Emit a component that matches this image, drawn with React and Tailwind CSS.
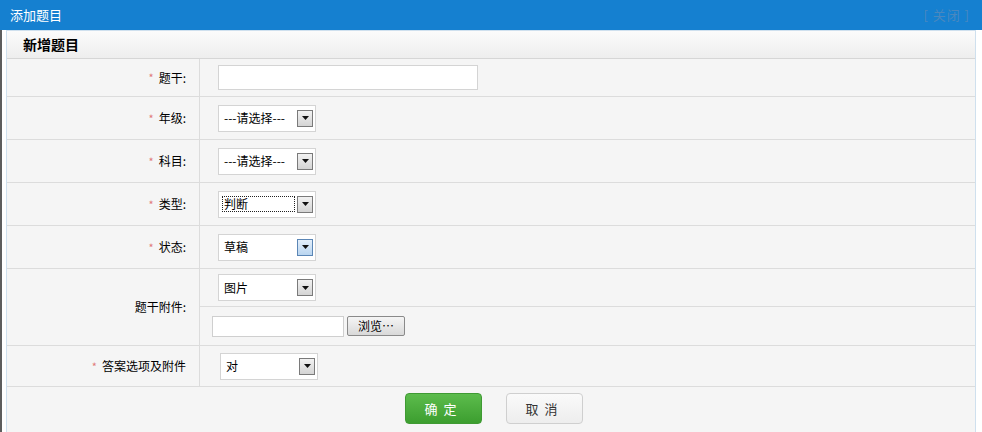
const font = { fontFamily: '"SimSun", "Noto Sans CJK SC", "Liberation Sans", sans-serif' };

function Arrow({ active }) {
  return (
    <span
      className={
        "flex h-[17px] w-[16px] shrink-0 items-center justify-center border " +
        (active
          ? "border-[#5b86b5] bg-gradient-to-b from-[#e4effa] to-[#b9d5f0]"
          : "border-[#7a7a7a] bg-gradient-to-b from-[#f2f2f2] to-[#d4d4d4]")
      }
    >
      <svg width="7" height="4" viewBox="0 0 7 4">
        <path d="M0 0h7L3.5 4Z" fill="#111" />
      </svg>
    </span>
  );
}

function Select({ value, focused, active }) {
  return (
    <div className="flex h-[27px] w-[98px] items-center justify-between border border-[#d4d4d4] bg-white pl-[3px] pr-[2px]">
      <span
        className={
          "flex h-[16px] flex-1 items-center text-[12px] text-black " +
          (focused ? "mr-[2px] border border-dotted border-[#222] pl-[1px]" : "pl-[2px]")
        }
      >
        {value}
      </span>
      <Arrow active={active} />
    </div>
  );
}

function Label({ text, star = true }) {
  return (
    <div className="flex items-center justify-end border-r border-[#dcdcdc] pr-[13px] text-[12px] text-black">
      {star && <span className="mr-[5px] text-[11px] text-[#e07a7a]">*</span>}
      <span>{text}</span>
    </div>
  );
}

function Row({ label, star, h, children, pl = "pl-[18px]" }) {
  return (
    <div className={"grid grid-cols-[193px_1fr] border-b border-[#dcdcdc] " + h}>
      <Label text={label} star={star} />
      <div className={"flex items-center " + pl}>{children}</div>
    </div>
  );
}

export default function App() {
  return (
    <div className="h-[432px] w-[982px] overflow-hidden bg-white" style={font}>
      <div className="flex h-[30px] items-center justify-between bg-[#1580d0] pl-[10px] pr-[12px]">
        <span className="text-[13px] text-white">添加题目</span>
        <span className="text-[13px] tracking-[1px] text-[#4a88bf]">[ 关闭 ]</span>
      </div>
      <div className="flex h-[402px] border-l-2 border-[#5d5d5d] pl-[4px] pr-[6px]">
        <div className="flex flex-1 flex-col border-x border-t border-[#cfe0ee] bg-[#f5f5f5]">
          <div className="flex h-[28px] items-center border-b border-[#d6d6d6] bg-gradient-to-b from-[#fbfbfb] to-[#eeeeee] pl-[16px]">
            <span className="text-[14px] font-bold text-black">新增题目</span>
          </div>
          <Row label="题干:" h="h-[38px]">
            <div className="h-[25px] w-[260px] border border-[#d4d4d4] bg-white" />
          </Row>
          <Row label="年级:" h="h-[43px]">
            <Select value="---请选择---" />
          </Row>
          <Row label="科目:" h="h-[43px]">
            <Select value="---请选择---" />
          </Row>
          <Row label="类型:" h="h-[43px]">
            <Select value="判断" focused />
          </Row>
          <Row label="状态:" h="h-[43px]">
            <Select value="草稿" active />
          </Row>
          <div className="grid h-[77px] grid-cols-[193px_1fr] border-b border-[#dcdcdc]">
            <Label text="题干附件:" star={false} />
            <div className="flex flex-col">
              <div className="flex h-[38px] items-center border-b border-[#dcdcdc] pl-[18px]">
                <Select value="图片" />
              </div>
              <div className="flex flex-1 items-center gap-[3px] pl-[12px]">
                <div className="h-[21px] w-[132px] border border-[#cfcfcf] bg-white" />
                <button className="flex h-[20px] w-[58px] items-center justify-center rounded-[2px] border border-[#8a8a8a] bg-gradient-to-b from-[#f5f5f5] to-[#d9d9d9] text-[12px] text-black">
                  浏览…
                </button>
              </div>
            </div>
          </div>
          <Row label="答案选项及附件" h="h-[41px]" pl="pl-[20px]">
            <Select value="对" />
          </Row>
          <div className="flex flex-1 items-start justify-center gap-[24px] pt-[6px] pl-[6px]">
            <button className="h-[31px] w-[77px] rounded-[4px] border border-[#3f9a33] bg-gradient-to-b from-[#5cbc4c] to-[#3c9e2f] text-[13px] tracking-[6px] text-white">
              确定
            </button>
            <button className="h-[31px] w-[77px] rounded-[4px] border border-[#cfcfcf] bg-gradient-to-b from-[#fafafa] to-[#ededed] text-[13px] tracking-[6px] text-[#333]">
              取消
            </button>
          </div>
        </div>
      </div>
    </div>
  );
}
